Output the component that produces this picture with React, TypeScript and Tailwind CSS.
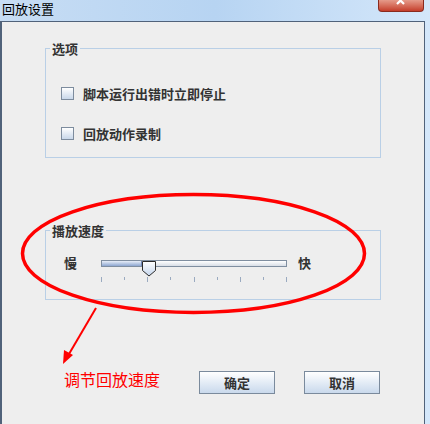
import React from "react";

const cjk = { fontFamily: '"Noto Sans CJK SC", "Liberation Sans", sans-serif' };

function CheckRow({ label }: { label: string }) {
  return (
    <div className="flex items-center h-[20px]">
      <span className="w-[13px] h-[13px] border border-[#7d8c9e] bg-gradient-to-b from-[#ffffff] to-[#c9d8ea]" />
      <span className="ml-[9px] text-[13px] leading-[15px] font-bold text-[#333]">{label}</span>
    </div>
  );
}

function Slider() {
  // 9 ticks, every second one is a major tick
  const ticks = Array.from({ length: 9 }, (_, i) => i % 2 === 0);
  return (
    <div className="relative w-[186px] h-[26px]">
      <div className="mt-[5px] h-[7px] flex border border-[#7f8ea0]">
        <div className="w-[40px] bg-gradient-to-b from-[#e8eef8] to-[#8da6d0] border-r border-[#6f86b5]" />
        <div className="flex-1 bg-gradient-to-b from-[#ffffff] to-[#d8dee6]" />
      </div>
      <svg className="absolute left-[40px] top-0" width="16" height="17" viewBox="0 0 16 17">
        <defs>
          <linearGradient id="thumb" x1="0" y1="0" x2="0" y2="1">
            <stop offset="0" stopColor="#ffffff" />
            <stop offset="1" stopColor="#c4d5ec" />
          </linearGradient>
        </defs>
        <path d="M1.5 1.5 H14.5 V10.5 L8 16 L1.5 10.5 Z" fill="url(#thumb)" stroke="#2b2b2b" strokeWidth="1" />
      </svg>
      <div className="mt-[10px] flex justify-between items-start">
        {ticks.map((major, i) => (
          <span key={i} className={`w-px bg-[#9aaac0] ${major ? "h-[5px]" : "h-[3px]"}`} />
        ))}
      </div>
    </div>
  );
}

export default function App() {
  return (
    <div
      className="relative w-[430px] h-[424px] overflow-hidden bg-gradient-to-r from-[#c7ddf4] via-[#b7d4f2] to-[#d4e7fa]"
      style={cjk}
    >
      {/* 标题栏 */}
      <div className="h-[21px] flex items-start">
        <span className="ml-[2px] mt-[1px] text-[13px] leading-[15px] text-black">回放设置</span>
        <div className="ml-auto mr-[6px] w-[46px] h-[12px] rounded-b-[4px] border border-t-0 border-[#8a2a1e] bg-gradient-to-b from-[#e59a8a] to-[#c43c2a] flex justify-center">
          <svg width="12" height="6" viewBox="0 0 12 6">
            <path d="M2 -3 L9 4 M9 -3 L2 4" stroke="#ffffff" strokeWidth="2.2" />
          </svg>
        </div>
      </div>

      {/* 内容面板 */}
      <div className="w-[425px] h-[403px] bg-[#eeeeee] border-l-2 border-t border-r border-[#50627a]">
        <fieldset className="ml-[43px] mt-[19px] w-[336px] h-[117px] border border-[#b9cfe6]">
          <legend className="ml-[4px] px-[2px] text-[13px] leading-[15px] font-bold text-[#333]">选项</legend>
          <div className="pl-[15px] pt-[27px] flex flex-col gap-[20px]">
            <CheckRow label="脚本运行出错时立即停止" />
            <CheckRow label="回放动作录制" />
          </div>
        </fieldset>

        <fieldset className="ml-[43px] mt-[65px] w-[336px] h-[77px] border border-[#b9cfe6]">
          <legend className="ml-[4px] px-[2px] text-[13px] leading-[15px] font-bold text-[#333]">播放速度</legend>
          <div className="pl-[18px] pt-[17px] flex items-start">
            <span className="text-[13px] leading-[16px] font-bold text-[#333]">慢</span>
            <div className="ml-[24px]">
              <Slider />
            </div>
            <span className="ml-[11px] text-[13px] leading-[16px] font-bold text-[#333]">快</span>
          </div>
        </fieldset>

        <div className="mt-[71px] pl-[62px] flex items-start">
          <span className="text-[16px] leading-[16px] text-[#ff0000]">调节回放速度</span>
          <button className="ml-[39px] w-[76px] h-[23px] border border-[#7a8a9c] bg-gradient-to-b from-[#ffffff] to-[#c9d9ec] text-[13px] font-bold text-[#333]">
            确定
          </button>
          <button className="ml-[29px] w-[76px] h-[23px] border border-[#7a8a9c] bg-gradient-to-b from-[#ffffff] to-[#c9d9ec] text-[13px] font-bold text-[#333]">
            取消
          </button>
        </div>
      </div>

      {/* 红色标注 */}
      <svg className="absolute left-0 top-0 pointer-events-none" width="430" height="424" viewBox="0 0 430 424">
        <ellipse cx="193.5" cy="253.5" rx="171" ry="59" fill="none" stroke="#ff0000" strokeWidth="3.5" />
        <line x1="96" y1="308" x2="69" y2="354" stroke="#ff0000" strokeWidth="2" />
        <path d="M63 364 L64 350 L73 355 Z" fill="#ff0000" />
      </svg>
    </div>
  );
}
